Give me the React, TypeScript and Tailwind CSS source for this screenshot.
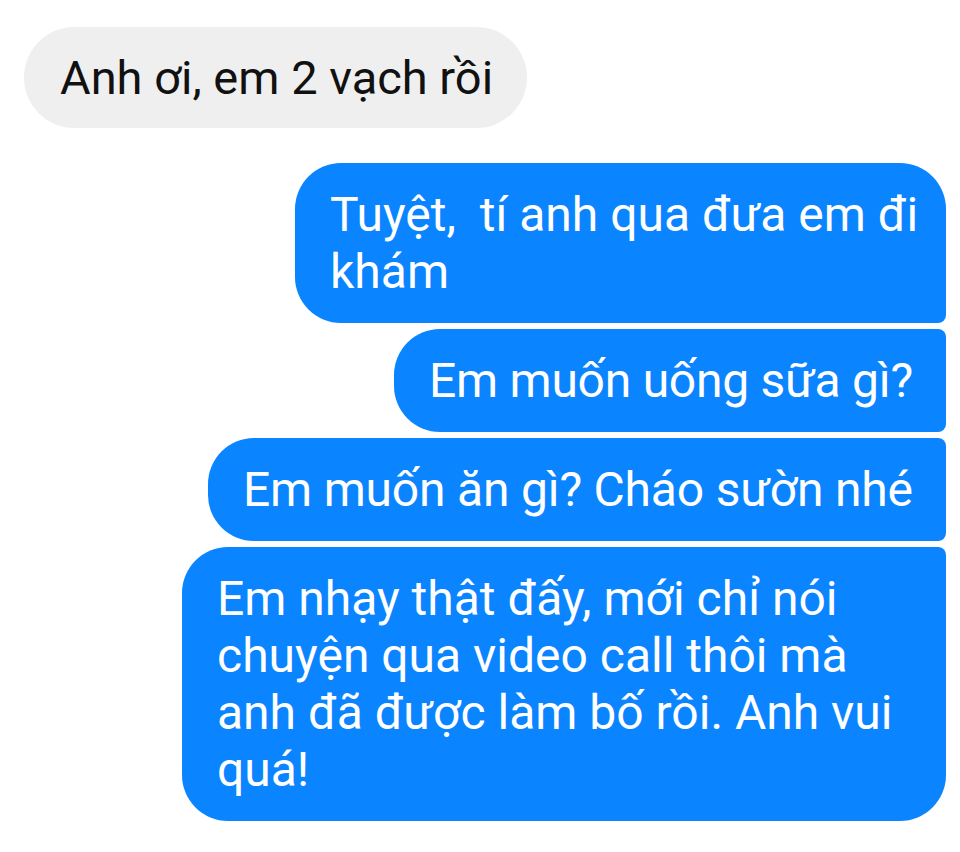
const sent = [
  {
    text: 'Tuyệt,  tí anh qua đưa em đi khám',
    className: 'w-[651px] whitespace-pre-wrap pr-[22px] rounded-tr-[46px] rounded-br-[8px]',
  },
  {
    text: 'Em muốn uống sữa gì?',
    className: 'w-[552px] whitespace-nowrap pr-[30px] tracking-[-0.25px] rounded-tr-[8px] rounded-br-[8px]',
  },
  {
    text: 'Em muốn ăn gì? Cháo sườn nhé',
    className: 'w-[738px] whitespace-nowrap pr-[30px] tracking-[-0.2px] rounded-tr-[8px] rounded-br-[8px]',
  },
  {
    text: 'Em nhạy thật đấy, mới chỉ nói chuyện qua video call thôi mà anh đã được làm bố rồi. Anh vui quá!',
    className: 'w-[764px] pr-[30px] rounded-tr-[8px] rounded-br-[46px]',
  },
];

export default function App() {
  return (
    <div
      className="min-h-[852px] w-[960px] bg-white pt-[27px] flex flex-col"
      style={{ fontFamily: 'Roboto, "Noto Sans", sans-serif' }}
    >
      <div className="ml-[24px] self-start rounded-full bg-[#efefef] h-[101px] pl-[36px] pr-[34px] flex items-center">
        <span className="text-[47px] leading-[57px] text-[#111]">Anh ơi, em 2 vạch rồi</span>
      </div>

      <div className="mt-[35px] mr-[14px] flex flex-col items-end gap-[6px]">
        {sent.map((m, i) => (
          <div
            key={i}
            className={`bg-[#0a84ff] text-white text-[48px] leading-[57px] py-[23px] pl-[35px] rounded-tl-[46px] rounded-bl-[46px] ${m.className}`}
          >
            {m.text}
          </div>
        ))}
      </div>
    </div>
  );
}
